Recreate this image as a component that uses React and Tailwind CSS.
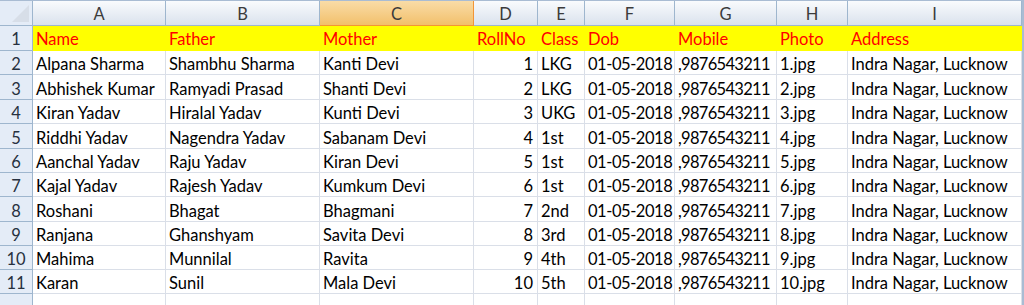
const COLS = ['A', 'B', 'C', 'D', 'E', 'F', 'G', 'H', 'I']

const HEAD = ['Name', 'Father', 'Mother', 'RollNo', 'Class', 'Dob', 'Mobile', 'Photo', 'Address']

const ROWS = [
  ['Alpana Sharma',  'Shambhu Sharma', 'Kanti Devi',   '1',  'LKG'],
  ['Abhishek Kumar', 'Ramyadi Prasad', 'Shanti Devi',  '2',  'LKG'],
  ['Kiran Yadav',    'Hiralal Yadav',  'Kunti Devi',   '3',  'UKG'],
  ['Riddhi Yadav',   'Nagendra Yadav', 'Sabanam Devi', '4',  '1st'],
  ['Aanchal Yadav',  'Raju Yadav',     'Kiran Devi',   '5',  '1st'],
  ['Kajal Yadav',    'Rajesh Yadav',   'Kumkum Devi',  '6',  '1st'],
  ['Roshani',        'Bhagat',         'Bhagmani',     '7',  '2nd'],
  ['Ranjana',        'Ghanshyam',      'Savita Devi',  '8',  '3rd'],
  ['Mahima',         'Munnilal',       'Ravita',       '9',  '4th'],
  ['Karan',          'Sunil',          'Mala Devi',    '10', '5th'],
]

// row heights taken from the shot (rows 2..11)
const HEIGHTS = ['h-6', 'h-[25px]', 'h-6', 'h-[25px]', 'h-6', 'h-6', 'h-[25px]', 'h-6', 'h-6', 'h-6']

const GRID = 'grid grid-cols-[33px_133px_154px_154px_64px_47px_90px_102px_71px_174px_2px]'

const cell = 'border-r border-b border-[#dadfe8] px-[3px] pt-[4px] flex items-center whitespace-nowrap overflow-hidden'
const rowHead = 'border-r border-b border-[#9eb6ce] bg-[#e4ecf7] text-[#27313f] pt-[4px] flex items-center justify-center'

export default function App() {
  return (
    <div className="w-[1024px] h-[305px] overflow-hidden bg-white text-[16.5px] leading-none text-black font-['Lato',sans-serif]">
      {/* Column letters */}
      <div className={`${GRID} h-[26px] border-t border-[#a9bcd3]`}>
        <div className="relative border-r border-b border-[#9eb6ce] bg-[#e4ecf7]">
          <div className="absolute right-[3px] bottom-[3px] w-0 h-0 border-l-[17px] border-l-transparent border-b-[17px] border-b-[#d7dee8]" />
        </div>
        {COLS.map(c => (
          <div key={c}
            className={c === 'C'
              ? 'border-r border-b border-[#f29536] bg-gradient-to-b from-[#f9dca7] to-[#f2c06a] text-[#3b3b3b] pt-[2px] flex items-center justify-center'
              : 'border-r border-b border-[#9eb6ce] bg-gradient-to-b from-[#f9fbfd] to-[#dae2ed] text-[#3b3b3b] pt-[2px] flex items-center justify-center'}>
            {c}
          </div>
        ))}
        <div className="bg-[#a9bcd3]" />
      </div>

      {/* Row 1 header line */}
      <div className={`${GRID} h-[25px]`}>
        <div className={`${rowHead} !pt-[2px]`}>1</div>
        {HEAD.map(h => (
          <div key={h} className="bg-[#ffff00] text-[#ff0000] px-[3px] pt-[2px] flex items-center whitespace-nowrap">{h}</div>
        ))}
        <div className="bg-[#a9bcd3]" />
      </div>

      {ROWS.map((r, i) => (
        <div key={i} className={`${GRID} ${HEIGHTS[i]}`}>
          <div className={rowHead}>{i + 2}</div>
          <div className={cell}>{r[0]}</div>
          <div className={cell}>{r[1]}</div>
          <div className={cell}>{r[2]}</div>
          <div className={`${cell} justify-end pr-[4px]`}>{r[3]}</div>
          <div className={cell}>{r[4]}</div>
          <div className={`${cell} tracking-[-0.45px]`}>01-05-2018</div>
          <div className={`${cell} tracking-[-0.7px]`}>,9876543211</div>
          <div className={cell}>{i + 1}.jpg</div>
          <div className={cell}>Indra Nagar, Lucknow</div>
          <div className="bg-[#a9bcd3]" />
        </div>
      ))}

      {/* partial row 12 */}
      <div className={`${GRID} h-6`}>
        <div className="border-r border-[#9eb6ce] bg-[#e4ecf7]" />
        {COLS.map(c => <div key={c} className="border-r border-[#dadfe8]" />)}
        <div className="bg-[#a9bcd3]" />
      </div>
    </div>
  )
}
